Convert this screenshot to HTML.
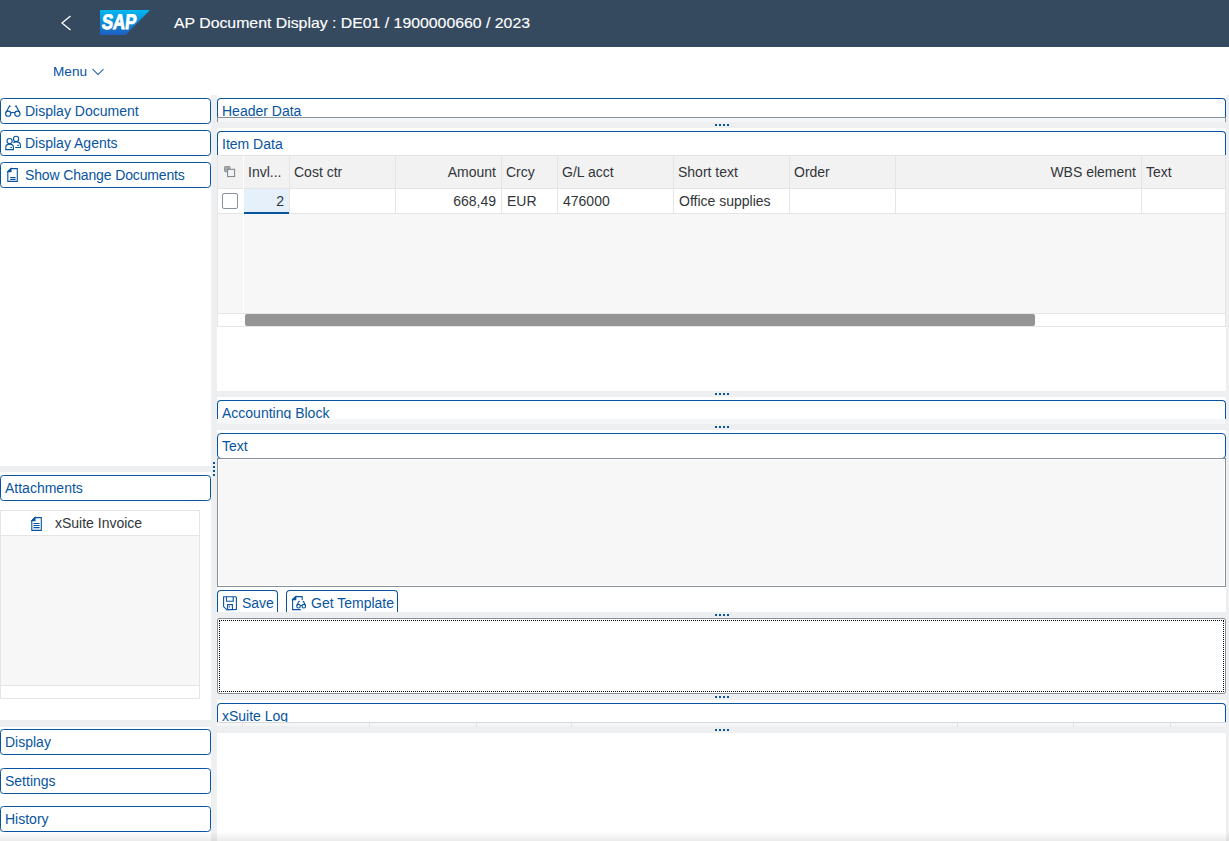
<!DOCTYPE html>
<html><head><meta charset="utf-8">
<style>
*{margin:0;padding:0;box-sizing:border-box}
html,body{width:1229px;height:841px;overflow:hidden;background:#fff;font-family:"Liberation Sans",sans-serif;font-size:14px;color:#32363a}
.a{position:absolute}
.t{position:absolute;white-space:nowrap;line-height:16px;font-size:14px}
.blue{color:#0854a0}
.btn{position:absolute;left:0;width:211px;height:26px;border:1px solid #0854a0;border-radius:3.5px;background:#fff}
.gray{background:#edeff0}
.pan{position:absolute;left:217px;width:1009px;border:1px solid #0854a0;border-bottom:0;border-radius:4px 4px 0 0;background:#fff}
.dots{position:absolute;width:14px;height:2px;background:repeating-linear-gradient(90deg,#0854a0 0 2px,transparent 2px 4px)}
.vdots{position:absolute;width:2px;height:14px;background:repeating-linear-gradient(180deg,#0854a0 0 2px,transparent 2px 4px)}
.col{position:absolute;top:0;width:1px;background:#e5e5e5}
</style></head><body>

<!-- shell header -->
<div class="a" style="left:0;top:0;width:1229px;height:47px;background:#354a5f"></div>
<svg class="a" style="left:58px;top:12px" width="16" height="22" viewBox="0 0 16 22"><polyline points="12.5,4 4,11 12.5,18" fill="none" stroke="#fff" stroke-width="1.3"/></svg>
<svg class="a" style="left:100px;top:10px" width="50" height="25" viewBox="0 0 50 25">
<defs><linearGradient id="sg" x1="0" y1="0" x2="0" y2="1"><stop offset="0" stop-color="#00b8f1"/><stop offset="1" stop-color="#1e5fbf"/></linearGradient></defs>
<polygon points="0,0 50,0 25.5,25 0,25" fill="url(#sg)"/>
<text x="1.2" y="19.4" font-family="Liberation Sans" font-weight="bold" font-size="21" fill="#fff" stroke="#fff" stroke-width="0.9" textLength="34.6" lengthAdjust="spacingAndGlyphs" transform="skewX(-6) translate(2,0)">SAP</text>
</svg>
<div class="t" style="left:174px;top:13.6px;line-height:18px;font-size:15px;color:#fff;transform:scaleX(1.055);transform-origin:0 0;-webkit-text-stroke:0.15px #fff">AP Document Display : DE01 / 1900000660 / 2023</div>

<!-- menu -->
<div class="t blue" style="left:53px;top:64px;font-size:13.6px">Menu</div>
<svg class="a" style="left:91px;top:67px" width="14" height="10" viewBox="0 0 14 10"><polyline points="1.5,2 7,7.5 12.5,2" fill="none" stroke="#0854a0" stroke-width="1.05"/></svg>

<!-- separator column -->
<div class="a gray" style="left:211px;top:95px;width:6px;height:746px"></div>
<div class="vdots" style="left:213px;top:462px"></div>
<div class="a" style="left:1228px;top:462px;width:1px;height:14px;background:repeating-linear-gradient(180deg,#a07890 0 2px,transparent 2px 4px)"></div>
<div class="a gray" style="left:1226px;top:95px;width:3px;height:746px"></div>


<!-- left buttons -->
<div class="btn" style="top:98px"></div>
<div class="t blue" style="left:25px;top:103px">Display Document</div>
<div class="btn" style="top:130px"></div>
<div class="t blue" style="left:25px;top:135px">Display Agents</div>
<div class="btn" style="top:162px"></div>
<div class="t blue" style="left:25px;top:167px;letter-spacing:-0.14px">Show Change Documents</div>

<div class="a gray" style="left:0;top:466px;width:211px;height:6px"></div>
<div class="btn" style="top:475px"></div>
<div class="t blue" style="left:5px;top:480px">Attachments</div>

<div class="a" style="left:0;top:510px;width:200px;height:189px;border:1px solid #e5e5e5;background:#f7f7f7"></div>
<div class="a" style="left:0;top:510px;width:200px;height:26px;border:1px solid #e5e5e5;background:#fff"></div>
<div class="a" style="left:0;top:685px;width:200px;height:14px;border:1px solid #e5e5e5;background:#fff"></div>
<div class="t" style="left:55px;top:515px">xSuite Invoice</div>

<div class="a gray" style="left:0;top:720px;width:211px;height:7px"></div>
<div class="btn" style="top:729px"></div>
<div class="t blue" style="left:5px;top:734px">Display</div>
<div class="btn" style="top:768px"></div>
<div class="t blue" style="left:5px;top:773px">Settings</div>
<div class="btn" style="top:806px"></div>
<div class="t blue" style="left:5px;top:811px">History</div>

<!-- right: header data -->
<div class="pan" style="top:98px;height:20px"></div>
<div class="a" style="left:217px;top:117px;width:1009px;height:1px;background:#89919a"></div>
<div class="a" style="left:217px;top:118px;width:1009px;height:4px;background:#f5f6f7;border-left:1px solid #89919a;border-right:1px solid #89919a"></div>
<div class="t blue" style="left:222px;top:103px">Header Data</div>
<div class="a gray" style="left:217px;top:122px;width:1009px;height:6px"></div>
<div class="dots" style="left:715px;top:124px"></div>

<!-- item data -->
<div class="pan" style="top:131px;height:25px"></div>
<div class="t blue" style="left:222px;top:136px">Item Data</div>
<div class="a" style="left:217px;top:155px;width:1009px;height:172px;background:#f7f7f7;border:1px solid #e5e5e5"></div>
<div class="a" style="left:217px;top:155px;width:1009px;height:34px;background:#f2f2f2;border:1px solid #e5e5e5"></div>
<div class="a" style="left:218px;top:189px;width:1007px;height:25px;background:#fff;border-bottom:1px solid #e5e5e5"></div>
<div class="a" style="left:217px;top:313px;width:1009px;height:14px;background:#fff;border:1px solid #e5e5e5"></div>
<div class="a" style="left:245px;top:314px;width:790px;height:12px;background:#949494;border-radius:2px"></div>
<div class="a" style="left:243px;top:156px;width:1px;height:157px;background:#fff"></div>
<div class="a" style="left:289px;top:155px;width:1px;height:59px;background:#e5e5e5"></div>
<div class="a" style="left:395px;top:155px;width:1px;height:59px;background:#e5e5e5"></div>
<div class="a" style="left:501px;top:155px;width:1px;height:59px;background:#e5e5e5"></div>
<div class="a" style="left:557px;top:155px;width:1px;height:59px;background:#e5e5e5"></div>
<div class="a" style="left:673px;top:155px;width:1px;height:59px;background:#e5e5e5"></div>
<div class="a" style="left:789px;top:155px;width:1px;height:59px;background:#e5e5e5"></div>
<div class="a" style="left:895px;top:155px;width:1px;height:59px;background:#e5e5e5"></div>
<div class="a" style="left:1141px;top:155px;width:1px;height:59px;background:#e5e5e5"></div>
<div class="a" style="left:244px;top:189px;width:45px;height:25px;background:#e5f0fa;border-bottom:2px solid #0854a0"></div>
<div class="a" style="left:222px;top:193px;width:16px;height:16px;border:1px solid #89919a;border-radius:2px;background:#fff"></div>

<div class="t" style="left:248px;top:164px">Invl...</div>
<div class="t" style="left:294px;top:164px">Cost ctr</div>
<div class="t" style="left:396px;top:164px;width:100px;text-align:right">Amount</div>
<div class="t" style="left:506px;top:164px">Crcy</div>
<div class="t" style="left:562px;top:164px">G/L acct</div>
<div class="t" style="left:678px;top:164px">Short text</div>
<div class="t" style="left:794px;top:164px">Order</div>
<div class="t" style="left:896px;top:164px;width:240px;text-align:right">WBS element</div>
<div class="t" style="left:1146px;top:164px">Text</div>

<div class="t" style="left:244px;top:193px;width:40px;text-align:right">2</div>
<div class="t" style="left:396px;top:193px;width:100px;text-align:right">668,49</div>
<div class="t" style="left:507px;top:193px">EUR</div>
<div class="t" style="left:563px;top:193px">476000</div>
<div class="t" style="left:679px;top:193px">Office supplies</div>

<div class="a gray" style="left:217px;top:391px;width:1009px;height:6px"></div>
<div class="dots" style="left:715px;top:393px"></div>

<!-- accounting block -->
<div class="pan" style="top:400px;height:19px;overflow:hidden"><div class="t blue" style="left:4px;top:4px">Accounting Block</div></div>
<div class="a" style="left:217px;top:419px;width:1009px;height:5px;background:#f5f6f7"></div>
<div class="a gray" style="left:217px;top:424px;width:1009px;height:6px"></div>
<div class="dots" style="left:715px;top:426px"></div>

<!-- text -->
<div class="pan" style="top:433px;height:26px;border-bottom:1px solid #0854a0;border-radius:4px"></div>
<div class="t blue" style="left:222px;top:438px">Text</div>
<div class="a" style="left:217px;top:458px;width:1009px;height:129px;background:#f7f7f7;border:1px solid #89919a"><div class="a" style="left:0;top:0;right:0;bottom:0;border:1px solid #fff"></div></div>

<div class="a" style="left:217px;top:590px;width:61px;height:22px;border:1px solid #0854a0;border-bottom:0;border-radius:4px 4px 0 0"></div>
<div class="t blue" style="left:242px;top:595px">Save</div>
<div class="a" style="left:286px;top:590px;width:112px;height:22px;border:1px solid #0854a0;border-bottom:0;border-radius:4px 4px 0 0"></div>
<div class="t blue" style="left:311px;top:595px">Get Template</div>

<div class="a gray" style="left:217px;top:612px;width:1009px;height:6px"></div>
<div class="dots" style="left:715px;top:614px"></div>
<div class="a" style="left:217px;top:618px;width:1009px;height:76px;border:1px solid #89919a;border-radius:2px"></div>
<div class="a" style="left:219px;top:620px;width:1005px;height:72px;border:1px dotted #000"></div>
<div class="a gray" style="left:217px;top:694px;width:1009px;height:6px"></div>
<div class="dots" style="left:715px;top:696px"></div>

<!-- xsuite log -->
<div class="pan" style="top:703px;height:19px;overflow:hidden"><div class="t blue" style="left:4px;top:4px">xSuite Log</div></div>
<div class="a" style="left:217px;top:722px;width:1009px;height:4px;background:#f5f6f7;border-top:1px solid #d9d9d9"></div>
<div class="a gray" style="left:217px;top:726px;width:1009px;height:7px"></div>
<div class="dots" style="left:715px;top:729px"></div>
<div class="a" style="left:242px;top:722px;width:1px;height:5px;background:#e0e0e0"></div><div class="a" style="left:369px;top:722px;width:1px;height:5px;background:#e0e0e0"></div><div class="a" style="left:476px;top:722px;width:1px;height:5px;background:#e0e0e0"></div><div class="a" style="left:571px;top:722px;width:1px;height:5px;background:#e0e0e0"></div><div class="a" style="left:957px;top:722px;width:1px;height:5px;background:#e0e0e0"></div><div class="a" style="left:1073px;top:722px;width:1px;height:5px;background:#e0e0e0"></div><div class="a" style="left:1170px;top:722px;width:1px;height:5px;background:#e0e0e0"></div>


<!-- icons -->
<svg class="a" style="left:2px;top:102px" width="22" height="18" viewBox="0 0 22 18" fill="none" stroke="#0854a0" stroke-width="1.1">
<circle cx="6.2" cy="11.7" r="2.6"/><circle cx="15.4" cy="11.7" r="2.6"/>
<path d="M8.6,10.6 L13,10.6"/><path d="M3.9,10.4 L7.6,3.9 L8.6,4.6"/><path d="M17.7,10.4 L14,3.9 L13,4.6"/>
</svg>
<svg class="a" style="left:2px;top:133px" width="22" height="20" viewBox="0 0 22 20" fill="none" stroke="#0854a0" stroke-width="1.1">
<circle cx="7.6" cy="8.1" r="2.6"/><path d="M3.8,16.6 L3.8,14.3 Q3.8,11.1 7.6,11.1 Q11.4,11.1 11.4,14.3 L11.4,16.6 Z"/><path d="M8.3,14.5 L10,14.5"/>
<circle cx="14.1" cy="5.9" r="2.6"/><path d="M11.3,9.5 Q12.2,8.9 14.1,8.9 Q18.4,8.9 18.4,12 L18.4,14.5 L13.2,14.5"/><path d="M15.2,12.4 L16.8,12.4"/>
</svg>
<svg class="a" style="left:4px;top:165px" width="18" height="20" viewBox="0 0 18 20" fill="none" stroke="#0854a0" stroke-width="1.1">
<path d="M7,3.6 L13.3,3.6 L13.3,16.4 L3.8,16.4 L3.8,6.8 Z"/><path d="M3.8,6.8 L7,6.8 L7,3.6 Z" fill="#0854a0"/>
<path d="M6.2,12.5 L11.6,12.5 M6.2,14.4 L11.6,14.4"/>
</svg>
<svg class="a" style="left:28px;top:514px" width="18" height="20" viewBox="0 0 18 20" fill="none" stroke="#0854a0" stroke-width="1.1">
<path d="M7,3.6 L13.3,3.6 L13.3,16.4 L3.8,16.4 L3.8,6.8 Z"/><path d="M3.8,6.8 L7,6.8 L7,3.6 Z" fill="#0854a0"/>
<path d="M5.4,9.5 L11.6,9.5 M5.4,11.5 L11.6,11.5 M5.4,13.6 L11.6,13.6"/>
</svg>
<svg class="a" style="left:220px;top:162px" width="20" height="20" viewBox="0 0 20 20">
<rect x="4.5" y="4.5" width="5.5" height="5.2" rx="0.8" fill="#a3a8ad" stroke="#8a9096" stroke-width="0.9"/>
<rect x="7.6" y="7.3" width="7" height="7.3" fill="#f2f2f2" stroke="#7b8187" stroke-width="1"/>
</svg>
<svg class="a" style="left:220px;top:593px" width="20" height="20" viewBox="0 0 20 20" fill="none" stroke="#0854a0" stroke-width="1.1">
<path d="M3.6,3.7 L15.6,3.7 L16.4,4.5 L16.4,16.4 L7,16.9 L3.6,13.6 Z"/><path d="M6.5,3.7 L6.5,8.3 L13.2,8.3 L13.2,3.7"/>
<path d="M7.6,16.6 L7.6,11.6 L12.4,11.6 L12.4,16.4"/><path d="M9.4,13.2 L9.4,14.6"/>
</svg>
<svg class="a" style="left:289px;top:593px" width="20" height="20" viewBox="0 0 20 20" fill="none" stroke="#0854a0" stroke-width="1.1">
<path d="M13.2,7 L13.2,3.6 L6.8,3.6 L3.6,6.6 L3.6,16.6 L11.8,16.6"/><path d="M3.6,6.6 L6.8,6.6 L6.8,3.6 Z" fill="#0854a0"/>
<circle cx="9.5" cy="13.2" r="1.8"/><circle cx="14.8" cy="13.2" r="1.8"/><path d="M11.3,12.5 L13,12.5"/>
<path d="M7.9,12.5 L9.8,8.6 Q10.2,8.1 10.8,8.4"/><path d="M16.4,12.5 L14.6,8.6 Q14.2,8.1 13.6,8.4"/>
</svg>
<div class="a" style="left:0;top:832px;width:1229px;height:9px;background:linear-gradient(rgba(0,0,0,0),rgba(0,0,0,0.08))"></div>
</body></html>
